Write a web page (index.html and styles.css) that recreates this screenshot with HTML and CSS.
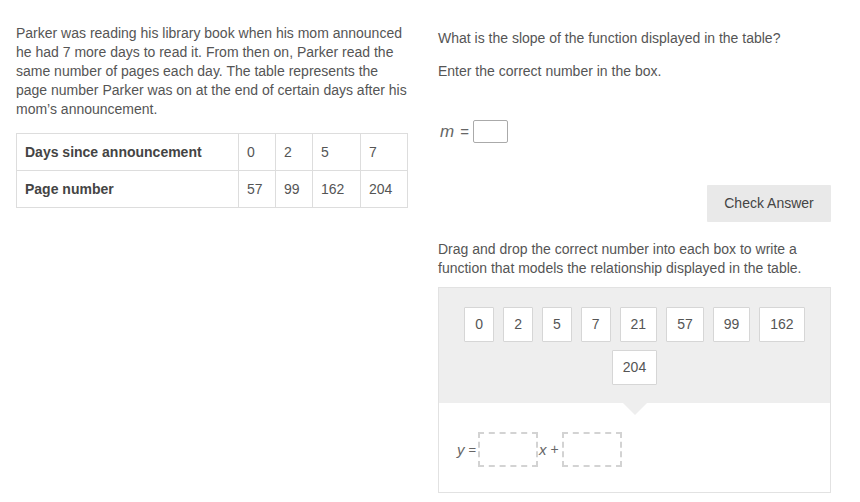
FILE: index.html
```html
<!DOCTYPE html>
<html>
<head>
<meta charset="utf-8">
<link rel="stylesheet" href="styles.css">
</head>
<body>
<div class="page">
  <div class="col left">
    <p class="stem">Parker was reading his library book when his mom announced he had 7 more days to read it. From then on, Parker read the same number of pages each day. The table represents the page number Parker was on at the end of certain days after his mom’s announcement.</p>
    <table class="data">
      <tr><th>Days since announcement</th><td class="c1">0</td><td class="c2">2</td><td class="c3">5</td><td class="c4">7</td></tr>
      <tr><th>Page number</th><td>57</td><td>99</td><td>162</td><td>204</td></tr>
    </table>
  </div>
  <div class="col right">
    <p class="q">What is the slope of the function displayed in the table?</p>
    <p class="q q2">Enter the correct number in the box.</p>
    <div class="mrow"><span class="var">m</span><span class="eq">=</span><span class="inbox"></span></div>
    <div class="btnrow"><button class="check">Check Answer</button></div>
    <p class="q drag">Drag and drop the correct number into each box to write a function that models the relationship displayed in the table.</p>
    <div class="panel">
      <div class="tray">
        <span class="tile">0</span><span class="tile">2</span><span class="tile">5</span><span class="tile">7</span><span class="tile">21</span><span class="tile">57</span><span class="tile">99</span><span class="tile">162</span><span class="tile">204</span>
        <span class="arrow"></span>
      </div>
      <div class="answer">
        <span class="var">y</span><span class="eq">=</span><span class="drop"></span><span class="var x">x</span><span class="plus">+</span><span class="drop"></span>
      </div>
    </div>
  </div>
</div>
</body>
</html>
```
FILE: styles.css
```css
* { box-sizing: border-box; }
body {
  margin: 0;
  background: #fff;
  font-family: "Liberation Sans", Arial, sans-serif;
  font-size: 14px;
  line-height: 19px;
  color: #555;
}
.page {
  display: flex;
  gap: 30px;
  padding: 0 0 0 16px;
}
.col.left { width: 392px; padding-top: 24px; }
.col.right { width: 393px; padding-top: 29px; }
p { margin: 0; }
.stem { margin-bottom: 14px; }
.data {
  border-collapse: collapse;
  width: 392px;
}
.data th, .data td {
  border: 1px solid #ddd;
  height: 37px;
  padding: 0 0 0 8px;
  text-align: left;
  font-weight: normal;
}
.data th { font-weight: bold; color: #444; width: 222px; }
.data .c1, .data .c2 { width: 37px; }
.data .c3 { width: 48px; }
.q2 { margin-top: 14px; }
.mrow {
  margin-top: 39px;
  display: flex;
  align-items: center;
  height: 23px;
  padding-left: 2px;
}
.mrow .var { font-size: 17px; }
.var { font-style: italic; font-size: 15px; color: #666; }
.eq { margin: 0 4px 0 6px; color: #666; font-size: 15px; }
.inbox {
  width: 35px;
  height: 23px;
  border: 1px solid #aaa;
  border-radius: 2px;
  background: #fff;
}
.btnrow {
  display: flex;
  justify-content: flex-end;
  margin-top: 42px;
}
.check {
  width: 124px;
  height: 37px;
  border: none;
  background: #e9e9e9;
  font-family: "Liberation Sans", Arial, sans-serif;
  font-size: 14px;
  line-height: 17px;
  color: #444;
  padding: 0;
  border-radius: 1px;
}
.drag { margin-top: 18px; }
.panel {
  margin-top: 9px;
  border: 1px solid #e2e2e2;
  width: 393px;
}
.tray {
  position: relative;
  background: #eee;
  padding: 19px 20px 18px;
  display: flex;
  flex-wrap: wrap;
  justify-content: center;
  column-gap: 9px;
  row-gap: 8px;
}
.tile {
  height: 35px;
  padding: 0 10px;
  display: flex;
  align-items: center;
  justify-content: center;
  background: #fff;
  border: 1px solid #d6d6d6;
  color: #555;
  border-radius: 1px;
}
.arrow {
  position: absolute;
  left: 50%;
  bottom: -12px;
  margin-left: -12px;
  width: 0;
  height: 0;
  border-left: 12px solid transparent;
  border-right: 12px solid transparent;
  border-top: 12px solid #eee;
}
.answer {
  height: 89px;
  display: flex;
  align-items: center;
  padding: 3px 0 0 18px;
}
.answer .eq { margin: 0 2px 0 4px; font-size: 13px; }
.answer .var { font-size: 15px; }
.drop {
  width: 60px;
  height: 35px;
  border: 2px dashed #d3d3d3;
}
.answer .x { margin-left: 1px; }
.plus { margin: 0 3px 0 4px; color: #666; font-size: 14px; }
```
